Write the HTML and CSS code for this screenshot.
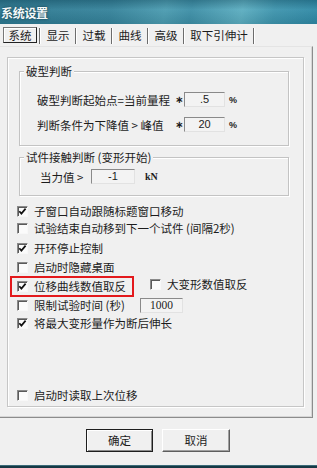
FILE: index.html
```html
<!DOCTYPE html>
<html>
<head>
<meta charset="utf-8">
<title>系统设置</title>
<link rel="stylesheet" href="styles.css">
</head>
<body>
<div class="win">
  <div class="titlebar"><span class="title">系统设置</span></div>
  <div class="tabs">
    <span class="tab sel">系统</span><span class="sep"></span>
    <span class="tab">显示</span><span class="sep"></span>
    <span class="tab">过载</span><span class="sep"></span>
    <span class="tab">曲线</span><span class="sep"></span>
    <span class="tab">高级</span><span class="sep"></span>
    <span class="tab wide">取下引伸计</span><span class="sep"></span>
  </div>
  <div class="page">
    <div class="frame">
      <div class="group g1">
        <div class="legend">破型判断</div>
        <div class="frow r1"><span class="lbl">破型判断起始点=当前量程</span><span class="star">∗</span><span class="field">.5</span><span class="unit">%</span></div>
        <div class="frow r2"><span class="lbl">判断条件为下降值 &gt; 峰值</span><span class="star">∗</span><span class="field">20</span><span class="unit">%</span></div>
      </div>
      <div class="group g2">
        <div class="legend">试件接触判断 (变形开始)</div>
        <div class="frow r3"><span class="lbl2">当力值 &gt;</span><span class="field f2">-1</span><span class="kn">kN</span></div>
      </div>

      <div class="cb c1"><span class="box on"><svg viewBox="0 0 11 11" width="11" height="11"><path d="M2.3 5.2 L4.4 7.6 L8.6 2.6" fill="none" stroke="#111" stroke-width="1.7"/></svg></span><span>子窗口自动跟随标题窗口移动</span></div>
      <div class="cb c2"><span class="box"></span><span>试验结束自动移到下一个试件 (间隔2秒)</span></div>
      <div class="cb c3"><span class="box on"><svg viewBox="0 0 11 11" width="11" height="11"><path d="M2.3 5.2 L4.4 7.6 L8.6 2.6" fill="none" stroke="#111" stroke-width="1.7"/></svg></span><span>开环停止控制</span></div>
      <div class="cb c4"><span class="box"></span><span>启动时隐藏桌面</span></div>
      <div class="pair">
        <div class="hl">
          <div class="cb inhl"><span class="box on"><svg viewBox="0 0 11 11" width="11" height="11"><path d="M2.3 5.2 L4.4 7.6 L8.6 2.6" fill="none" stroke="#111" stroke-width="1.7"/></svg></span><span>位移曲线数值取反</span></div>
        </div>
        <div class="cb side"><span class="box"></span><span>大变形数值取反</span></div>
      </div>
      <div class="cb c6"><span class="box"></span><span class="lbl3">限制试验时间 (秒)</span><span class="field f3">1000</span></div>
      <div class="cb c7"><span class="box on"><svg viewBox="0 0 11 11" width="11" height="11"><path d="M2.3 5.2 L4.4 7.6 L8.6 2.6" fill="none" stroke="#111" stroke-width="1.7"/></svg></span><span>将最大变形量作为断后伸长</span></div>
      <div class="cb c8"><span class="box"></span><span>启动时读取上次位移</span></div>
    </div>
  </div>
  <div class="buttons">
    <span class="btn ok">确定</span>
    <span class="btn cancel">取消</span>
  </div>
  <div class="taskbar"></div>
</div>
</body>
</html>
```
FILE: styles.css
```css
* { box-sizing: border-box; margin: 0; padding: 0; }
html, body { width: 317px; height: 468px; overflow: hidden; }
body {
  background: #f0f0f0;
  font-family: "Noto Sans CJK SC", "Noto Sans", sans-serif;
  font-size: 11.5px;
  color: #1c1c1c;
}
.win { display: flex; flex-direction: column; height: 468px; }

.titlebar {
  height: 24px;
  display: flex;
  align-items: center;
  padding-left: 1px;
  background:
    linear-gradient(180deg, rgba(10,40,55,0.25) 0%, rgba(255,255,255,0.05) 40%, rgba(0,0,0,0.08) 100%),
    linear-gradient(100deg, #2c7890 0%, #34829a 35%, #4a9bb0 52%, #3c8ea6 60%, #5badc0 76%, #3d94ad 86%, #2e88a5 100%);
}
.title {
  font-weight: bold;
  font-size: 12px;
  color: #f4f9fa;
  letter-spacing: -0.3px;
  text-shadow: 0 0 2px #1d4e5e, 0 0 3px #1d4e5e;
}

.tabs {
  height: 22px;
  display: flex;
  align-items: center;
  padding-left: 3px;
}
.tab {
  width: 34px;
  height: 16px;
  line-height: 16px;
  text-align: center;
}
.tab.wide { width: 68px; }
.tab.sel {
  border: 1px solid #777;
  border-right-color: #222;
  border-bottom-color: #222;
  box-shadow: inset 1px 1px 0 #fff;
  line-height: 14px;
  margin-right: 2px;
}
.sep {
  width: 2px;
  height: 16px;
  border-left: 1px solid #6c6c6c;
  border-right: 1px solid #ffffff;
  margin-top: 2px;
}

.page {
  width: 313px;
  height: 372px;
  border-top: 1px solid #e4e4e4;
  border-right: 1px solid #8c8c8c;
  border-bottom: 1px solid #8c8c8c;
  box-shadow: inset -1px -1px 0 #d6d6d6;
  padding: 10px 0 0 7px;
}
.frame {
  width: 297px;
  height: 350px;
  border: 1px solid #c6c6c6;
  box-shadow: inset 1px 1px 0 #fff, 1px 1px 0 #fff;
  padding: 13px 0 0 0;
  display: flex;
  flex-direction: column;
}

.group {
  width: 270px;
  margin-left: 11px;
  border: 1px solid #c3c3c3;
  box-shadow: inset 1px 1px 0 #fff, 1px 1px 0 #fff;
}
.g1 { height: 75px; }
.g2 { height: 39px; margin-top: 11px; }
.legend {
  width: max-content;
  height: 14px;
  line-height: 14px;
  margin: -8px 0 0 4px;
  padding: 0 2px;
  background: #f0f0f0;
}
.frow { display: flex; align-items: center; height: 15px; padding-left: 17px; }
.r1 { margin-top: 14px; }
.r2 { margin-top: 10px; }
.r3 { margin-top: 5px; padding-left: 20px; }
.lbl { width: 138px; white-space: nowrap; }
.star { width: 9px; font-family: "DejaVu Sans", sans-serif; font-size: 10px; font-weight: bold; }
.lbl2 { width: 51px; white-space: nowrap; }
.field {
  width: 41px;
  height: 15px;
  line-height: 13px;
  text-align: center;
  border: 1px solid #e2e2e2;
  border-top-color: #8a8a8a;
  border-left-color: #8a8a8a;
  background: #f3f3f3;
  font-family: "Liberation Sans", sans-serif;
  font-size: 11px;
}
.f2 { width: 44px; }
.f3 { width: 43px; font-family: "Liberation Serif", serif; font-size: 11.5px; }
.unit { margin-left: 4px; font-family: "Liberation Sans", sans-serif; font-size: 9px; font-weight: bold; }
.kn { margin-left: 10px; font-family: "Liberation Serif", serif; font-size: 10px; font-weight: bold; }

.cb { display: flex; align-items: center; height: 16px; margin-left: 9px; white-space: nowrap; }
.box {
  width: 11px;
  height: 11px;
  margin-right: 6px;
  flex: none;
  border-top: 1px solid #8a8a8a;
  border-left: 1px solid #8a8a8a;
  border-right: 1px solid #f8f8f8;
  border-bottom: 1px solid #f8f8f8;
  box-shadow: inset 1px 1px 0 #5a5a5a;
  background: #fbfbfb;
  position: relative;
  overflow: hidden;
}
.box svg { display: block; margin: -1px 0 0 -1px; }
.c1 { margin-top: 7px; }
.c2 { margin-top: 1px; }
.c3 { margin-top: 4px; }
.c4 { margin-top: 3px; }
.pair { display: flex; align-items: flex-start; margin-top: 1px; }
.hl {
  margin-left: 2px;
  width: 124px;
  height: 21px;
  border: 2px solid #e3191c;
  padding-left: 5px;
}
.hl .cb { margin-left: 0; }
.side { margin-left: 16px; }
.c6 { margin-top: 0; }
.lbl3 { width: 106px; }
.c7 { margin-top: 2px; }
.c8 { margin-top: 56px; }

.buttons { display: flex; padding-left: 86px; gap: 9px; margin-top: 11px; }
.btn {
  height: 23px;
  line-height: 21px;
  text-align: center;
  font-size: 11.5px;
}
.ok {
  width: 67px;
  border: 1px solid #1e1e1e;
  box-shadow: inset 1px 1px 0 #fff, inset -1px -1px 0 #8a8a8a;
}
.cancel {
  width: 68px;
  border: 1px solid #fff;
  border-right-color: #5e5e5e;
  border-bottom-color: #5e5e5e;
  box-shadow: inset -1px -1px 0 #a0a0a0;
}
.taskbar { margin-top: auto; height: 3px; background: #163844; border-top: 1px solid #3b6a78; }
```
